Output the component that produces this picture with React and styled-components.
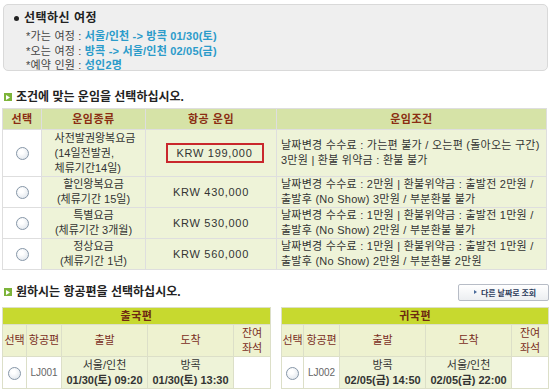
import styled, { createGlobalStyle } from "styled-components";

const GlobalStyle = createGlobalStyle`
  body {
    margin: 0;
    background: #fff;
    font-family: "Liberation Sans", "Noto Sans CJK KR", sans-serif;
    font-size: 11px;
    color: #333;
  }
`;

const Page = styled.div`
  width: 550px;
  padding: 4px 0 0 2px;
  box-sizing: border-box;
`;

const TripBox = styled.div`
  margin-left: 1px;
  width: 545px;
  height: 67px;
  box-sizing: border-box;
  background: #efefef;
  border: 1px solid #d9d9d9;
  border-radius: 5px;
  padding: 5px 0 0 10px;
`;

const TripTitle = styled.div`
  display: flex;
  align-items: center;
  gap: 5px;
  font-size: 12px;
  font-weight: bold;
  line-height: 16px;
  letter-spacing: 0.5px;
  color: #222;
  margin-bottom: 3px;
  &::before {
    content: "";
    width: 5px;
    height: 5px;
    border-radius: 50%;
    background: #222;
  }
`;

const TripLine = styled.div`
  padding-left: 12px;
  line-height: 14.5px;
  letter-spacing: 0.2px;
  color: #444;
  b {
    color: #2b9bca;
  }
`;

const SectionHead = styled.div`
  display: flex;
  align-items: center;
  justify-content: space-between;
  height: 16px;
  margin-top: ${(p) => p.$top}px;
  margin-bottom: ${(p) => p.$bottom}px;
  padding-right: 1px;
`;

const HeadText = styled.h3`
  display: flex;
  align-items: center;
  gap: 4px;
  margin: 0 0 0 2px;
  font-size: 12px;
  font-weight: bold;
  line-height: 16px;
  color: #222;
`;

const GreenMark = styled.span`
  display: inline-flex;
  align-items: center;
  justify-content: center;
  width: 8px;
  height: 8px;
  background: #7db43a;
`;

const SearchButton = styled.button`
  display: flex;
  align-items: center;
  gap: 4px;
  height: 17px;
  width: 91px;
  padding: 0 0 0 15px;
  box-sizing: border-box;
  border: 1px solid #b7bcc6;
  border-radius: 2px;
  background: linear-gradient(#ffffff, #eceef1);
  font-family: "Noto Sans CJK KR", sans-serif;
  font-size: 8px;
  font-weight: bold;
  line-height: 15px;
  color: #2b3a5a;
  &::before {
    content: "";
    border-left: 3px solid #4a6a9a;
    border-top: 2.5px solid transparent;
    border-bottom: 2.5px solid transparent;
  }
`;

const Table = styled.table`
  width: ${(p) => p.$width}px;
  border-collapse: collapse;
  table-layout: fixed;
  td,
  th {
    border: 1px solid ${(p) => p.$line};
    padding: 0;
    text-align: center;
    vertical-align: middle;
  }
`;

const FareHeader = styled.th`
  height: 20px;
  background: #d6e3a7;
  color: #8a2d12;
  font-size: 11px;
  font-weight: bold;
  line-height: 14px;
  letter-spacing: 0.5px;
`;

const Cell = styled.td`
  height: ${(p) => p.$h}px;
  background: ${(p) => (p.$plain ? "#ffffff" : "#eef3d8")};
  line-height: 15px;
  color: #333;
  &.left {
    text-align: left;
    padding-left: 4px;
    letter-spacing: 0.25px;
  }
`;

const NameBlock = styled.span`
  display: inline-block;
  text-align: ${(p) => (p.$left ? "left" : "center")};
  margin-left: ${(p) => (p.$left ? 3 : 0)}px;
`;

const Price = styled.span`
  letter-spacing: 0.7px;
`;

const PriceBox = styled(Price)`
  display: inline-block;
  border: 2px solid #c9272c;
  padding: 1px 10px 1px 9px;
  line-height: 14px;
  margin-left: 8px;
`;

const Radio = styled.span`
  display: inline-block;
  width: 11px;
  height: 11px;
  border-radius: 50%;
  border: 1px solid #8797a8;
  background: radial-gradient(circle at 40% 35%, #ffffff 20%, #d9e0e8 100%);
  vertical-align: middle;
`;

const FlightRow = styled.div`
  display: flex;
  gap: 10px;
  margin-top: 7px;
`;

const TitleCell = styled.th`
  height: 16px;
  background: #c7d92f;
  color: #6e2a12;
  font-size: 11px;
  font-weight: bold;
  line-height: 14px;
  letter-spacing: 0.5px;
`;

const ColHead = styled.th`
  height: 31px;
  background: #eef2d0;
  color: #7a2e1e;
  font-weight: normal;
  font-size: 11px;
  line-height: 15px;
`;

const FlightNo = styled.span`
  font-size: 10px;
  color: #666;
`;

const Time = styled.b`
  display: block;
  color: #333;
`;

const fares = [
  {
    name: ["사전발권왕복요금", "(14일전발권,", "체류기간14일)"],
    price: "KRW 199,000",
    boxed: true,
    cond: ["날짜변경 수수료 : 가는편 불가 / 오는편 (돌아오는 구간)", "3만원 | 환불 위약금 : 환불 불가"],
    h: 46,
  },
  {
    name: ["할인왕복요금", "(체류기간 15일)"],
    price: "KRW 430,000",
    cond: ["날짜변경 수수료 : 2만원 | 환불위약금 : 출발전 2만원 /", "출발후 (No Show) 3만원 / 부분환불 불가"],
    h: 29,
  },
  {
    name: ["특별요금", "(체류기간 3개월)"],
    price: "KRW 530,000",
    cond: ["날짜변경 수수료 : 1만원 | 환불위약금 : 출발전 1만원 /", "출발후 (No Show) 2만원 / 부분환불 불가"],
    h: 30,
  },
  {
    name: ["정상요금", "(체류기간 1년)"],
    price: "KRW 560,000",
    cond: ["날짜변경 수수료 : 1만원 | 환불위약금 : 출발전 1만원 /", "출발후 (No Show) 2만원 / 부분환불 2만원"],
    h: 30,
  },
];

const flights = [
  { title: "출국편", no: "LJ001", from: "서울/인천", dep: "01/30(토) 09:20", to: "방콕", arr: "01/30(토) 13:30", width: 268, cols: [24, 35, 86, 86, 37] },
  { title: "귀국편", no: "LJ002", from: "방콕", dep: "02/05(금) 14:50", to: "서울/인천", arr: "02/05(금) 22:00", width: 267, cols: [22, 36, 86, 86, 37] },
];

function Lines({ items }) {
  return items.map((t, i) => (
    <span key={i}>
      {t}
      {i < items.length - 1 && <br />}
    </span>
  ));
}

function Head({ children }) {
  return (
    <HeadText>
      <GreenMark>
        <svg width="4" height="5" viewBox="0 0 4 5">
          <path d="M0 0 L4 2.5 L0 5 Z" fill="#fff" />
        </svg>
      </GreenMark>
      {children}
    </HeadText>
  );
}

function FlightTable({ f }) {
  return (
    <Table $width={f.width} $line="#dcdfc8">
      <colgroup>
        {f.cols.map((w, i) => (
          <col key={i} style={{ width: w }} />
        ))}
      </colgroup>
      <thead>
        <tr>
          <TitleCell colSpan={5}>{f.title}</TitleCell>
        </tr>
        <tr>
          <ColHead>선택</ColHead>
          <ColHead>항공편</ColHead>
          <ColHead>출발</ColHead>
          <ColHead>도착</ColHead>
          <ColHead>
            잔여
            <br />
            좌석
          </ColHead>
        </tr>
      </thead>
      <tbody>
        <tr>
          <Cell $h={31} $plain>
            <Radio />
          </Cell>
          <Cell $plain>
            <FlightNo>{f.no}</FlightNo>
          </Cell>
          <Cell>
            {f.from}
            <Time>{f.dep}</Time>
          </Cell>
          <Cell>
            {f.to}
            <Time>{f.arr}</Time>
          </Cell>
          <Cell $plain />
        </tr>
      </tbody>
    </Table>
  );
}

export default function App() {
  return (
    <Page>
      <GlobalStyle />
      <TripBox>
        <TripTitle>선택하신 여정</TripTitle>
        <TripLine>
          *가는 여정 : <b>서울/인천 -&gt; 방콕 01/30(토)</b>
        </TripLine>
        <TripLine>
          *오는 여정 : <b>방콕 -&gt; 서울/인천 02/05(금)</b>
        </TripLine>
        <TripLine>
          *예약 인원 : <b>성인2명</b>
        </TripLine>
      </TripBox>

      <SectionHead $top={18} $bottom={3}>
        <Head>조건에 맞는 운임을 선택하십시오.</Head>
      </SectionHead>

      <Table $width={545} $line="#dedede">
        <colgroup>
          <col style={{ width: 39 }} />
          <col style={{ width: 104 }} />
          <col style={{ width: 131 }} />
          <col />
        </colgroup>
        <thead>
          <tr>
            <FareHeader>선택</FareHeader>
            <FareHeader>운임종류</FareHeader>
            <FareHeader>항공 운임</FareHeader>
            <FareHeader>운임조건</FareHeader>
          </tr>
        </thead>
        <tbody>
          {fares.map((f, i) => (
            <tr key={i}>
              <Cell $h={f.h} $plain>
                <Radio />
              </Cell>
              <Cell>
                <NameBlock $left={f.boxed}>
                  <Lines items={f.name} />
                </NameBlock>
              </Cell>
              <Cell>
                {f.boxed ? <PriceBox>{f.price}</PriceBox> : <Price>{f.price}</Price>}
              </Cell>
              <Cell className="left">
                <Lines items={f.cond} />
              </Cell>
            </tr>
          ))}
        </tbody>
      </Table>

      <SectionHead $top={14} $bottom={0}>
        <Head>원하시는 항공편을 선택하십시오.</Head>
        <SearchButton>다른 날짜로 조회</SearchButton>
      </SectionHead>

      <FlightRow>
        {flights.map((f) => (
          <FlightTable key={f.no} f={f} />
        ))}
      </FlightRow>
    </Page>
  );
}
